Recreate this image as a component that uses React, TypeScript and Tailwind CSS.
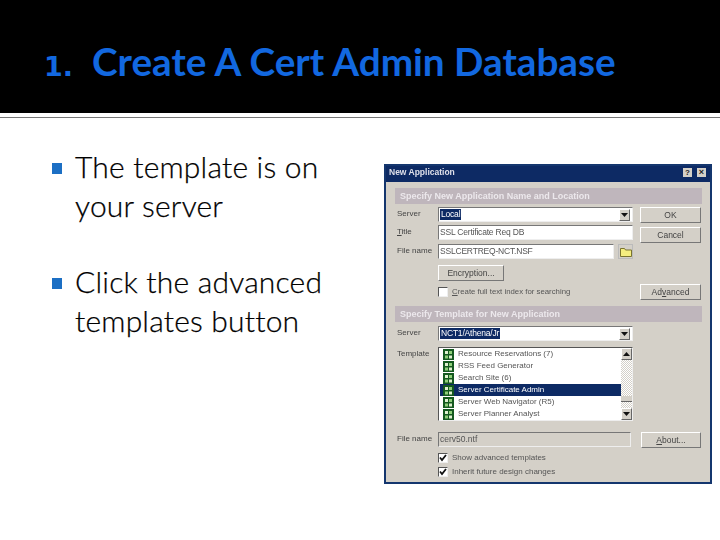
import React from 'react';

const dlgFont = "font-['Liberation_Sans',sans-serif]";

function SectionHead({ children }: { children: React.ReactNode }) {
  return (
    <div className="h-[16px] w-[307px] bg-[#bfb6bc] pl-[5px] text-[9px] font-bold leading-[16px] text-[#ece8ec] blur-[0.35px]">
      {children}
    </div>
  );
}

function Label({ children }: { children: React.ReactNode }) {
  return <div className="w-[43px] shrink-0 pl-[2px] text-[8px] leading-[13px] text-[#444] blur-[0.3px]">{children}</div>;
}

function Btn({ children, className = 'w-[61px] ' }: { children: React.ReactNode; className?: string }) {
  return (
    <div className={`${className} flex h-[16px] items-center justify-center border border-b-[#777] border-l-white border-r-[#777] border-t-white bg-[#d4d0c8] text-[8.5px] text-[#444] blur-[0.3px]`}>
      {children}
    </div>
  );
}

function Field({ children, className = '' }: { children: React.ReactNode; className?: string }) {
  return (
    <div className={`${className} flex h-[15px] items-center border border-b-[#eee] border-l-[#777] border-r-[#eee] border-t-[#777] bg-white pl-[1px] text-[8.5px] tracking-[-0.2px] text-[#555] blur-[0.3px]`}>
      {children}
    </div>
  );
}

function DropArrow() {
  return (
    <div className="mr-[2px] ml-auto flex h-[12px] w-[11px] items-center justify-center border border-b-[#666] border-l-white border-r-[#666] border-t-white bg-[#d4d0c8]">
      <svg width="7" height="4" viewBox="0 0 7 4"><path d="M0 0h7L3.5 4z" fill="#111" /></svg>
    </div>
  );
}

function Check({ on }: { on?: boolean }) {
  return (
    <div className="flex h-[10px] w-[10px] shrink-0 items-center justify-center border border-b-[#eee] border-l-[#555] border-r-[#eee] border-t-[#555] bg-white">
      {on && <svg width="8" height="8" viewBox="0 0 8 8"><path d="M1 3.5l2 2.5 4-5" fill="none" stroke="#111" strokeWidth="1.8" /></svg>}
    </div>
  );
}

function TemplateIcon() {
  return (
    <svg width="11" height="11" viewBox="0 0 11 11" className="shrink-0">
      <rect width="11" height="11" fill="#14591f" />
      <rect x="2" y="2" width="3" height="3" fill="#dff0d0" />
      <rect x="6" y="2" width="3" height="3" fill="#8fd07a" />
      <rect x="2" y="6.5" width="3" height="3" fill="#8fd07a" />
      <rect x="6" y="6.5" width="3" height="3" fill="#dff0d0" />
    </svg>
  );
}

const templates = [
  'Resource Reservations (7)',
  'RSS Feed Generator',
  'Search Site (6)',
  'Server Certificate Admin',
  'Server Web Navigator (R5)',
  'Server Planner Analyst',
];

function Dialog() {
  return (
    <div className={`${dlgFont} h-[320px] w-[328px] border-2 border-[#14366e] bg-[#d4d0c8]`}>
      {/* title bar */}
      <div className="flex h-[16px] items-center bg-[#0d2a64] pb-[3px] pl-[3px] pr-[4px]">
        <span className="text-[8.5px] font-bold text-[#dfe0ea] blur-[0.3px]">New Application</span>
        <div className="ml-auto flex gap-[5px]">
          <div className="flex h-[9px] w-[9px] items-center justify-center bg-[#d4d0c8] text-[8px] font-bold leading-none text-[#222]">?</div>
          <div className="flex h-[9px] w-[9px] items-center justify-center bg-[#d4d0c8] text-[9px] font-bold leading-none text-[#222]">×</div>
        </div>
      </div>

      <div className="flex flex-col pl-[9px] pt-[6px]">
        <SectionHead>Specify New Application Name and Location</SectionHead>

        <div className="mt-[3px] flex">
          <div className="flex w-[245px] flex-col">
            <div className="flex items-start">
              <Label>Server</Label>
              <Field className="w-[195px]">
                <span className="bg-[#0d2a64] px-[1px] leading-[11px] text-white">Local</span>
                <DropArrow />
              </Field>
            </div>
            <div className="mt-[3px] flex items-start">
              <Label><u>T</u>itle</Label>
              <Field className="w-[195px]">SSL Certificate Req DB</Field>
            </div>
            <div className="mt-[4px] flex items-start">
              <Label>File name</Label>
              <Field className="w-[176px]">SSLCERTREQ-NCT.NSF</Field>
              <div className="ml-[4px] flex h-[15px] w-[15px] items-center justify-center border border-[#bbb]">
                <svg width="12" height="10" viewBox="0 0 12 10"><path d="M0.5 9.5V1.5h4l1 1.5h6v6.5z" fill="#f5ee80" stroke="#7a7430" /></svg>
              </div>
            </div>
            <div className="mt-[6px] pl-[43px]">
              <Btn className="w-[66px] ">Encryption...</Btn>
            </div>
            <div className="mt-[4px] flex h-[14px] items-center pl-[43px]">
              <Check />
              <span className="ml-[4px] text-[7.8px] text-[#555] blur-[0.3px]"><u>C</u>reate full text index for searching</span>
            </div>
          </div>
          <div className="flex flex-col">
            <Btn>OK</Btn>
            <Btn className="mt-[4px] w-[61px] ">Cancel</Btn>
            <Btn className="mt-[41px] w-[61px] ">Ad<u>v</u>anced</Btn>
          </div>
        </div>

        <div className="mt-[6px]"><SectionHead>Specify Template for New Application</SectionHead></div>

        <div className="mt-[4px] flex items-start">
          <Label>Server</Label>
          <Field className="w-[195px]">
            <span className="bg-[#0d2a64] px-[1px] leading-[11px] text-white">NCT1/Athena/Jr</span>
            <DropArrow />
          </Field>
        </div>

        <div className="mt-[6px] flex items-start">
          <Label>Template</Label>
          <div className="flex h-[74px] w-[195px] border border-b-[#eee] border-l-[#555] border-r-[#eee] border-t-[#555] bg-white text-[8px] text-[#555]">
            <div className="flex w-[182px] flex-col pl-[1px]">
              {templates.map((t, i) => (
                <div key={t} className={`flex h-[12px] items-center gap-[4px] pl-[3px] ${i === 3 ? 'bg-[#0d2a64] text-white' : ''}`}>
                  <TemplateIcon />
                  <span className="blur-[0.25px]">{t}</span>
                </div>
              ))}
            </div>
            <div className="flex w-[11px] flex-col bg-[repeating-conic-gradient(#d4d0c8_0_25%,#fff_0_50%)] bg-[length:2px_2px]">
              <div className="flex h-[12px] items-center justify-center border border-b-[#666] border-r-[#666] border-l-white border-t-white bg-[#d4d0c8]">
                <svg width="7" height="4" viewBox="0 0 7 4"><path d="M0 4h7L3.5 0z" fill="#111" /></svg>
              </div>
              <div className="mt-[36px] h-[6px] border-b border-[#666] bg-[#d4d0c8]" />
              <div className="mt-auto flex h-[12px] items-center justify-center border border-b-[#666] border-r-[#666] border-l-white border-t-white bg-[#d4d0c8]">
                <svg width="7" height="4" viewBox="0 0 7 4"><path d="M0 0h7L3.5 4z" fill="#111" /></svg>
              </div>
            </div>
          </div>
        </div>

        <div className="mt-[11px] flex items-start">
          <Label>File name</Label>
          <div className="flex h-[15px] w-[193px] items-center border border-b-[#eee] border-l-[#777] border-r-[#eee] border-t-[#777] pl-[1px] text-[8.5px] text-[#555] blur-[0.3px]">cerv50.ntf</div>
          <Btn className="ml-[10px] w-[60px] "><u>A</u>bout...</Btn>
        </div>

        <div className="mt-[3px] flex h-[14px] items-center pl-[43px]">
          <Check on />
          <span className="ml-[4px] text-[8px] text-[#555] blur-[0.3px]">Show advanced templates</span>
        </div>
        <div className="flex h-[14px] items-center pl-[43px]">
          <Check on />
          <span className="ml-[4px] text-[8px] text-[#555] blur-[0.3px]">Inherit future design changes</span>
        </div>
      </div>
    </div>
  );
}

function Bullet({ children }: { children: React.ReactNode }) {
  return (
    <div className="flex">
      <div className="mt-[16px] h-[11px] w-[10px] shrink-0 bg-[#1c6fc4]" />
      <div className="ml-[13px] text-[30px] font-light leading-[39px] tracking-[0.2px] text-black [-webkit-text-stroke:0.25px_black]">{children}</div>
    </div>
  );
}

export default function App() {
  return (
    <div className="h-[540px] w-[720px] overflow-hidden bg-white font-['Lato','Open_Sans',sans-serif]">
      <div className="flex h-[113px] items-start bg-black pl-[44px] pt-[37px]">
        <h1 className="text-[38.7px] font-bold leading-[48px] text-[#1268e0]">
          <span className="mr-[19px] font-['DejaVu_Sans',sans-serif] text-[27px]">1.</span>Create A Cert Admin Database
        </h1>
      </div>
      <div className="mt-[4px] h-px bg-[#777]" />

      <div className="flex">
        <div className="flex w-[384px] shrink-0 flex-col gap-[37px] pl-[52px] pt-[29px]">
          <Bullet>The template is on<br />your server</Bullet>
          <Bullet>Click the advanced<br />templates button</Bullet>
        </div>
        <div className="pt-[46px]">
          <Dialog />
        </div>
      </div>
    </div>
  );
}
